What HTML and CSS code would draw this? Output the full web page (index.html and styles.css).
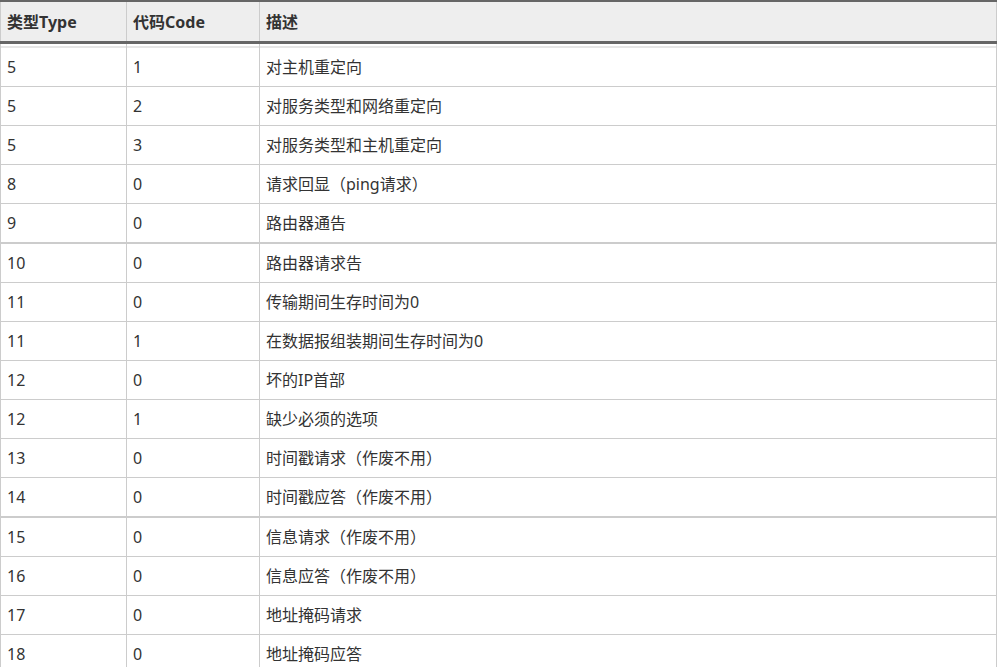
FILE: index.html
```html
<!DOCTYPE html>
<html lang="zh-CN">
<head>
<meta charset="utf-8">
<title>ICMP 类型</title>
<link rel="stylesheet" href="styles.css">
</head>
<body>
<table class="icmp">
  <colgroup>
    <col class="c-type">
    <col class="c-code">
    <col class="c-desc">
  </colgroup>
  <thead>
    <tr><th>类型Type</th><th>代码Code</th><th>描述</th></tr>
  </thead>
  <tbody>
    <tr class="first"><td>5</td><td>1</td><td>对主机重定向</td></tr>
    <tr><td>5</td><td>2</td><td>对服务类型和网络重定向</td></tr>
    <tr><td>5</td><td>3</td><td>对服务类型和主机重定向</td></tr>
    <tr><td>8</td><td>0</td><td>请求回显（ping请求）</td></tr>
    <tr><td>9</td><td>0</td><td>路由器通告</td></tr>
    <tr class="thick"><td>10</td><td>0</td><td>路由器请求告</td></tr>
    <tr><td>11</td><td>0</td><td>传输期间生存时间为0</td></tr>
    <tr><td>11</td><td>1</td><td>在数据报组装期间生存时间为0</td></tr>
    <tr><td>12</td><td>0</td><td>坏的IP首部</td></tr>
    <tr><td>12</td><td>1</td><td>缺少必须的选项</td></tr>
    <tr><td>13</td><td>0</td><td>时间戳请求（作废不用）</td></tr>
    <tr><td>14</td><td>0</td><td>时间戳应答（作废不用）</td></tr>
    <tr class="thick"><td>15</td><td>0</td><td>信息请求（作废不用）</td></tr>
    <tr><td>16</td><td>0</td><td>信息应答（作废不用）</td></tr>
    <tr><td>17</td><td>0</td><td>地址掩码请求</td></tr>
    <tr><td>18</td><td>0</td><td>地址掩码应答</td></tr>
  </tbody>
</table>
</body>
</html>
```

FILE: styles.css
```css
html, body {
  margin: 0;
  padding: 0;
  background: #fff;
}

.icmp {
  width: 997px;
  border-collapse: collapse;
  table-layout: fixed;
  font-family: "Noto Sans", "Noto Sans CJK SC", sans-serif;
  font-size: 16px;
  color: #333;
}

.c-type { width: 126px; }
.c-code { width: 133px; }
.c-desc { width: auto; }

.icmp th,
.icmp td {
  border: 1px solid #ccc;
  padding: 0 6px;
  text-align: left;
  vertical-align: middle;
  line-height: 20px;
  white-space: nowrap;
}

.icmp th {
  height: 38px;
  background: #eee;
  font-weight: bold;
  border-top: 2px solid #666;
  border-bottom: 3px solid #666;
  padding-top: 1px;
}

.icmp td {
  height: 38px;
}

.icmp tr.first td {
  height: 39px;
  padding-top: 3px;
  background: linear-gradient(to bottom, #fff 0, #fff 2px, #ccc 2px, #ccc 3px, #fff 3px);
}

.icmp tr.thick td {
  border-top: 2px solid #ccc;
}
```
